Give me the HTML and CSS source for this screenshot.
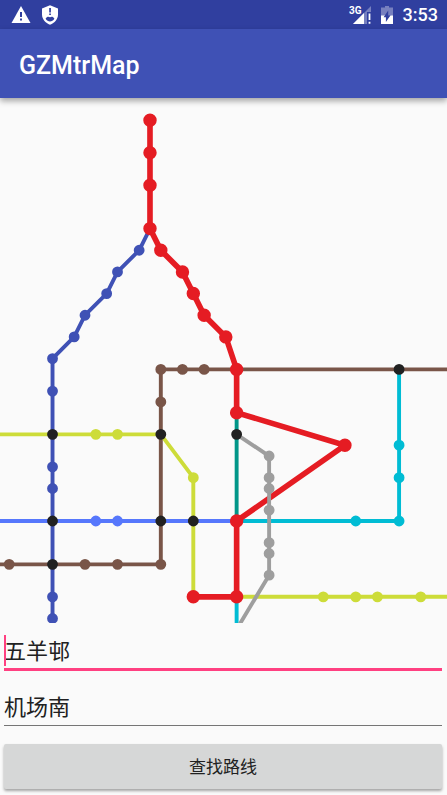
FILE: index.html
```html
<!DOCTYPE html>
<html lang="zh-CN">
<head>
<meta charset="utf-8">
<meta name="viewport" content="width=device-width, initial-scale=1">
<title>GZMtrMap</title>
<link rel="stylesheet" href="styles.css">
</head>
<body>
<div class="status">
  <div class="status-group">
    <svg class="icon-warning" viewBox="0 0 20 18" aria-hidden="true">
      <path class="solid" d="M10 0 19.500 17H0.500Z"/>
      <path class="cutout" d="M9 6h2v5H9zM9 12.600h2v2H9z"/>
    </svg>
    <svg class="icon-shield" viewBox="0 0 18 20" aria-hidden="true">
      <path class="solid" d="M9 0.300 17 3.600V9.500C17 14 13.600 18.200 9 19.700 4.400 18.200 1 14 1 9.500V3.600Z"/>
      <path class="cutout" d="M8.200 3h1.700v4.600H8.200zM8.200 8.600h1.700v1.500H8.200zM4.600 13.800C6 11.600 7.200 11.400 9 12.300 10.800 11.400 12 11.600 13.400 13.800 12.200 15.600 10.700 16.400 9 16.400S5.800 15.600 4.600 13.800Z"/>
    </svg>
  </div>
  <div class="status-group">
    <div class="signal">
      <span class="network">3G</span>
      <svg class="icon-signal" viewBox="0 0 18 18" aria-hidden="true">
        <path class="faint" d="M18 0V6H14V18H0Z"/>
        <path class="solid" d="M11 7V18H0Z"/>
        <path class="solid" d="M15.600 7.500h1.800v6.500h-1.800zM15.600 15.800h1.800v2h-1.800z"/>
      </svg>
    </div>
    <svg class="icon-battery" viewBox="0 0 12 18" aria-hidden="true">
      <path class="faint" d="M4 0h4v1.600h4V10H0V1.600h4z"/>
      <path class="solid" d="M0 9.500h12V18H0z"/>
      <path class="cutout" d="M7.200 4.500V9.200H9.600L4.900 16V11.300H2.600Z"/>
    </svg>
    <time class="clock">3:53</time>
  </div>
</div>
<header class="toolbar"><h1>GZMtrMap</h1></header>
<main class="content">
  <svg class="map" viewBox="0 0 447 525" preserveAspectRatio="xMinYMin slice" role="img" aria-label="GZMtrMap">
    <g transform="translate(9.200 22.300) scale(10.830)">
      <g class="line brown">
        <path d="M60 23H14V41H-20"/>
        <path class="stops" d="M14 23h0M16 23h0M18 23h0M14 26h0M14 41h0M10 41h0M7 41h0M0 41h0"/>
      </g>
      <g class="line lime">
        <path d="M-20 29H14L17 33V44H60"/>
        <path class="stops" d="M8 29h0M10 29h0M17 33h0M29 44h0M32 44h0M34 44h0M38 44h0"/>
      </g>
      <g class="line azure">
        <path d="M-20 37H21"/>
        <path class="stops" d="M8 37h0M10 37h0"/>
      </g>
      <g class="line indigo">
        <path d="M13 10 12 12 10 14 9 16 7 18 6 20 4 22V46"/>
        <path class="stops" d="M12 12h0M10 14h0M9 16h0M7 18h0M6 20h0M4 22h0M4 25h0M4 32h0M4 34h0M4 44h0M4 46h0"/>
      </g>
      <g class="line cyan">
        <path d="M21 50V37H36V23"/>
        <path class="stops" d="M32 37h0M36 37h0M36 33h0M36 30h0"/>
      </g>
      <g class="line teal">
        <path d="M21 27V37"/>
      </g>
      <g class="line route">
        <path d="M13 0V10L14 12 16 14 17 16 18 18 20 20 21 23V27L31 30 21 37V44H17"/>
        <path class="stops" d="M13 0h0M13 3h0M13 6h0M13 10h0M14 12h0M16 14h0M17 16h0M18 18h0M20 20h0M21 23h0M21 27h0M31 30h0M21 37h0M21 44h0M17 44h0"/>
      </g>
      <g class="line grey">
        <path d="M21 29 24 31V42L21 47"/>
        <path class="stops" d="M24 31h0M24 33h0M24 34h0M24 36h0M24 39h0M24 40h0M24 42h0"/>
      </g>
      <g class="line transfer">
        <path class="stops" d="M4 29h0M14 29h0M21 29h0M36 23h0M4 37h0M14 37h0M17 37h0M4 41h0"/>
      </g>
    </g>
  </svg>
  <form class="search">
    <div class="field active">
      <input type="text" value="五羊邨" aria-label="起点">
    </div>
    <div class="field">
      <input type="text" value="机场南" aria-label="终点">
    </div>
    <button type="button">查找路线</button>
  </form>
</main>
</body>
</html>
```

FILE: styles.css
```css
* {
  box-sizing: border-box;
}

body {
  margin: 0;
  min-height: 100vh;
  display: flex;
  flex-direction: column;
  background: #fafafa;
  color: #212121;
  font-family: Roboto, "Noto Sans CJK SC", sans-serif;
}

.status {
  display: flex;
  justify-content: space-between;
  align-items: center;
  height: 29px;
  padding: 0 9px 0 11px;
  background: #303f9f;
  color: #fff;
}

.status-group {
  display: flex;
  align-items: center;
  gap: 10px;
}

.status-group svg {
  display: block;
}

.solid {
  fill: #fff;
}

.faint {
  fill: #7780bf;
}

.cutout {
  fill: #303f9f;
}

.icon-warning {
  width: 20px;
  height: 18px;
}

.icon-shield {
  width: 18px;
  height: 20px;
}

.signal {
  display: flex;
  align-items: flex-start;
}

.network {
  margin-right: -9px;
  font-size: 10px;
  font-weight: 700;
  line-height: 10px;
}

.icon-signal {
  width: 18px;
  height: 18px;
}

.icon-battery {
  width: 12px;
  height: 18px;
}

.clock {
  font-size: 18px;
  font-weight: 500;
  line-height: 28px;
}

.toolbar {
  position: relative;
  display: flex;
  align-items: center;
  height: 69px;
  padding: 4px 19px 0;
  background: #3f51b5;
  color: #fff;
  box-shadow: 0 3px 6px rgba(0, 0, 0, 0.35);
}

.toolbar h1 {
  margin: 0;
  font-size: 25px;
  font-weight: 500;
  line-height: 32px;
}

.content {
  flex: 1;
  display: flex;
  flex-direction: column;
}

.map {
  display: block;
  width: 100%;
  height: 0;
  min-height: 240px;
  flex: 1;
  overflow: hidden;
}

.line {
  fill: none;
  stroke-width: 0.36;
}

.line .stops {
  stroke-width: 1;
  stroke-linecap: round;
}

.brown { stroke: #795548; }
.lime { stroke: #cddc39; }
.azure { stroke: #5677fc; }
.indigo { stroke: #3f51b5; }
.cyan { stroke: #00bcd4; }
.teal { stroke: #009688; }
.grey { stroke: #9e9e9e; }
.transfer { stroke: #212121; }

.route {
  stroke: #e51c23;
  stroke-width: 0.52;
}

.route .stops {
  stroke-width: 1.24;
}

.search {
  display: flex;
  flex-direction: column;
  padding: 12px 5px 6px 4px;
}

.field {
  position: relative;
  margin-bottom: 18px;
  border-bottom: 1px solid #757575;
}

.field.active {
  border-bottom: 3px solid #ff4081;
}

.field.active::before {
  content: "";
  position: absolute;
  left: 0;
  top: 0;
  width: 2px;
  height: 31px;
  background: #ff4081;
}

.field input {
  display: block;
  width: 100%;
  height: 33px;
  padding: 0 0 5px;
  border: 0;
  outline: 0;
  background: transparent;
  color: inherit;
  caret-color: #ff4081;
  font: inherit;
  font-size: 22px;
  line-height: 28px;
}

.field + .field input {
  height: 36px;
}

.search button {
  height: 45px;
  padding: 0 0 2px;
  border: 0;
  border-radius: 2px;
  background: #d6d7d7;
  box-shadow: 0 2px 3px rgba(0, 0, 0, 0.35);
  color: #212121;
  font-family: inherit;
  font-size: 17px;
  font-weight: 400;
}
```
